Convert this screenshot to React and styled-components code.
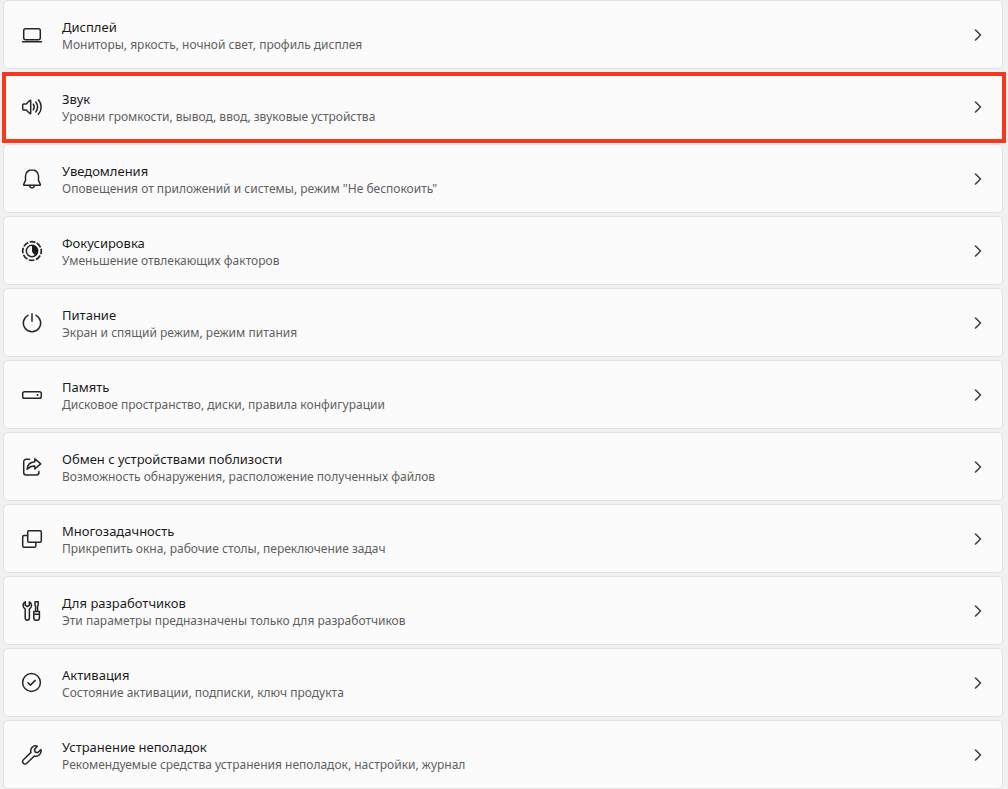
import React from "react"
import styled, { createGlobalStyle, css } from "styled-components";

const GlobalStyle = createGlobalStyle`
    * {
        box-sizing: border-box;
    }

    body {
        margin: 0;
        background: #f1f1f1;
        font-family: "Noto Sans", "Open Sans", sans-serif;
    }
`

const List = styled.ul`
    display: flex;
    flex-direction: column;
    gap: 3px;
    margin: 0;
    padding: 0 5px 0 3px;
    list-style: none;
`

const Item = styled.li`
    position: relative;

    ${(props) => props.$highlighted && css`
        &::after {
            content: "";
            position: absolute;
            inset: 0 -3px -2px -1px;
            z-index: 1;
            border: 4px solid #f8371f;
            pointer-events: none;
        }
    `}
`

const Card = styled.a`
    display: flex;
    align-items: center;
    gap: 18px;
    padding: 16px 16px 15px;
    border: 1px solid #e3e3e3;
    border-radius: 5px;
    background: #fbfbfb;
    color: #1b1b1b;
    text-decoration: none;

    &:hover {
        background: #f6f6f6;
    }
`

const Icon = styled.svg`
    flex: none;
    width: 24px;
    height: 24px;
    fill: none;
    stroke: #262626;
    stroke-width: 1.5;
    stroke-linecap: round;
    stroke-linejoin: round;
`

const Chevron = styled(Icon)`
    width: 16px;
    height: 16px;
    stroke: #3a3a3a;
`

const Text = styled.div`
    display: flex;
    flex: 1;
    flex-direction: column;
    min-width: 0;
    padding-top: 1px;
`

const Title = styled.span`
    font-size: 13px;
    line-height: 19px;
`

const Description = styled.span`
    color: #5f5f5f;
    font-size: 12px;
    line-height: 16px;
`

const icons = {
    display: (
        <>
            <rect x="3.7" y="5.7" width="16.6" height="11" rx="2" />
            <path d="M2.5 18.8h19" />
        </>
    ),
    sound: (
        <>
            <path d="M3.6 9h2.6l3.6-3.5c.4-.4.9-.2.9.3v12.4c0 .5-.5.7-.9.3L6.2 15H3.6c-.5 0-.9-.4-.9-.9V9.9c0-.5.4-.9.9-.9z" />
            <path d="M13.3 9.2c1.1 1.7 1.1 3.9 0 5.6M15.8 7c2.2 3 2.2 7 0 10M18.4 4.8c3.7 4.2 3.7 10.2 0 14.4" />
        </>
    ),
    bell: (
        <>
            <path d="M12 2.7c-3.7 0-6.5 2.9-6.5 6.5v4.2l-1.8 4c-.2.5.1.9.6.9h15.4c.5 0 .8-.4.6-.9l-1.8-4V9.2c0-3.6-2.8-6.5-6.5-6.5z" />
            <path d="M9.5 18.5c.2 1.5 1.2 2.4 2.5 2.4s2.3-.9 2.5-2.4" />
        </>
    ),
    focus: (
        <>
            <circle cx="12" cy="12" r="9.3" strokeWidth="1.7" strokeLinecap="butt" strokeDasharray="5.8 1.5" strokeDashoffset="2.6" />
            <circle cx="12" cy="12" r="5.7" />
            <path d="M12 6.3a5.7 5.7 0 0 1 3 10.6c-.4-2.2-3-2.4-3-4.9z" fill="#1b1b1b" stroke="none" />
        </>
    ),
    power: (
        <>
            <path d="M12 2.7v7.5" />
            <path d="M8 4.3a8.7 8.7 0 1 0 8 0" />
        </>
    ),
    storage: (
        <>
            <rect x="2.7" y="8.7" width="18.6" height="6.6" rx="1.8" />
            <circle cx="17.5" cy="12" r="1" fill="#262626" stroke="none" />
        </>
    ),
    share: (
        <>
            <path d="M9.5 4.3H6.2a2.5 2.5 0 0 0-2.5 2.5v10.6a2.5 2.5 0 0 0 2.5 2.5h10.2a2.5 2.5 0 0 0 2.5-2.5v-1" />
            <path d="M14.8 3.8l5.9 5.1-5.9 5.1v-2.9c-3.4-.1-5.6.9-7.7 3.2.3-4.1 2.9-7.1 7.7-7.5z" />
        </>
    ),
    windows: (
        <>
            <rect x="7.7" y="3.7" width="13.6" height="11.6" rx="1.2" />
            <path d="M7.5 8.5H3.9c-.7 0-1.2.5-1.2 1.2v9.4c0 .7.5 1.2 1.2 1.2h10.7c.7 0 1.2-.5 1.2-1.2v-3.5" />
        </>
    ),
    tools: (
        <>
            <path d="M5.3 2.8C3.7 3.6 2.9 5 3.1 6.7c.1 1.4.9 2.4 2.1 3.1v9c0 1.5.9 2.5 2.1 2.5s2.1-1 2.1-2.5v-9c1.2-.7 2-1.7 2.1-3.1.2-1.7-.6-3.1-2.2-3.9v3.6l-2 1.1-2-1.1z" />
            <path d="M15 2.8h3.2v3.4l-.6 1.2v5h-2v-5L15 6.2zM13.8 12.5h5.6v6.2c0 1.7-1.1 2.6-2.8 2.6s-2.8-.9-2.8-2.6zM13.8 15.3h5.6" />
        </>
    ),
    check: (
        <>
            <circle cx="11.5" cy="11.5" r="8.9" />
            <path d="M8 11.8l2.4 2.3 4.8-4.7" />
        </>
    ),
    wrench: (
        <path d="M17.3 3.2c-1.9-.7-4-.2-5.3 1.2-1.3 1.4-1.6 3.2-1 5l-7.6 7.4c-1 1-1 2.5-.1 3.5s2.5 1 3.5 0l7.5-7.3c1.8.6 3.8.2 5.2-1.2s1.9-3.4 1.3-5.2l-3.2 3.1-2.5-.7-.7-2.5z" />
    ),
};

const settings = [
    { icon: 'display', title: 'Дисплей', description: 'Мониторы, яркость, ночной свет, профиль дисплея' },
    { icon: 'sound', title: 'Звук', description: 'Уровни громкости, вывод, ввод, звуковые устройства', highlighted: true },
    { icon: 'bell', title: 'Уведомления', description: 'Оповещения от приложений и системы, режим "Не беспокоить"' },
    { icon: 'focus', title: 'Фокусировка', description: 'Уменьшение отвлекающих факторов' },
    { icon: 'power', title: 'Питание', description: 'Экран и спящий режим, режим питания' },
    { icon: 'storage', title: 'Память', description: 'Дисковое пространство, диски, правила конфигурации' },
    { icon: 'share', title: 'Обмен с устройствами поблизости', description: 'Возможность обнаружения, расположение полученных файлов' },
    { icon: 'windows', title: 'Многозадачность', description: 'Прикрепить окна, рабочие столы, переключение задач' },
    { icon: 'tools', title: 'Для разработчиков', description: 'Эти параметры предназначены только для разработчиков' },
    { icon: 'check', title: 'Активация', description: 'Состояние активации, подписки, ключ продукта' },
    { icon: 'wrench', title: 'Устранение неполадок', description: 'Рекомендуемые средства устранения неполадок, настройки, журнал' },
];

const SettingsItem = ({ icon, title, description, highlighted }) => (
    <Item $highlighted={highlighted}>
        <Card href={`#${icon}`}>
            <Icon viewBox="0 0 24 24" aria-hidden="true">{icons[icon]}</Icon>
            <Text>
                <Title>{title}</Title>
                <Description>{description}</Description>
            </Text>
            <Chevron viewBox="0 0 16 16" aria-hidden="true">
                <path d="M5.5 3l5 5-5 5" />
            </Chevron>
        </Card>
    </Item>
);

const App = () => {
    return (
        <>
            <GlobalStyle />
            <main>
                <List>
                    {settings.map((item) => (
                        <SettingsItem key={item.icon} {...item} />
                    ))}
                </List>
            </main>
        </>
    )
};

export default App;
